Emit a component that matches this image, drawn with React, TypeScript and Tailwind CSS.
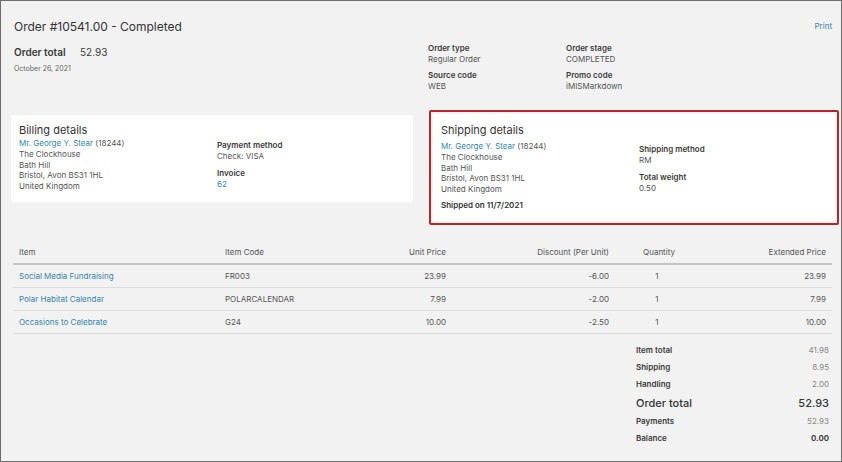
import React from "react";

const link = "text-[#3585ad]";

function Field({ label, value, valueClass = "" }: { label: string; value: string; valueClass?: string }) {
  return (
    <div>
      <div className="text-[8px] leading-[11px] font-semibold text-[#3a3a3a]">{label}</div>
      <div className={`text-[8px] leading-[11px] text-[#555] ${valueClass}`}>{value}</div>
    </div>
  );
}

const rows = [
  { item: "Social Media Fundraising", code: "FR003", unit: "23.99", disc: "-6.00", qty: "1", ext: "23.99" },
  { item: "Polar Habitat Calendar", code: "POLARCALENDAR", unit: "7.99", disc: "-2.00", qty: "1", ext: "7.99" },
  { item: "Occasions to Celebrate", code: "G24", unit: "10.00", disc: "-2.50", qty: "1", ext: "10.00" },
];

const gridCols = "grid grid-cols-[206px_131px_102px_163px_88px_129px]";

export default function App() {
  return (
    <div className="w-[842px] h-[462px] border border-[#6e6e6e] bg-[#f2f2f2] overflow-hidden font-['Inter',sans-serif] text-[#555]">
      {/* Top section */}
      <div className="h-[109px] flex items-start pl-[13px] pr-[9px] pt-[18px]">
        <div className="w-[414px] flex flex-col">
          <div className="text-[12px] leading-[16px] text-[#333]">Order #10541.00 - Completed</div>
          <div className="mt-[11px] flex items-center text-[10px] leading-[12px] text-[#3a3a3a]">
            <span className="font-semibold w-[66px]">Order total</span>
            <span>52.93</span>
          </div>
          <div className="mt-[6px] text-[7px] leading-[10px] text-[#666]">October 26, 2021</div>
        </div>
        <div className="mt-[24px] grid grid-cols-[138px_140px] gap-y-[5px]">
          <Field label="Order type" value="Regular Order" />
          <Field label="Order stage" value="COMPLETED" />
          <Field label="Source code" value="WEB" />
          <Field label="Promo code" value="iMISMarkdown" />
        </div>
        <div className={`ml-auto mt-[2px] text-[8px] leading-[10px] ${link}`}>Print</div>
      </div>

      {/* Cards */}
      <div className="flex items-start pl-[10px]">
        <div className="mt-[5px] w-[402px] bg-white rounded-[3px] pl-[8px] pt-[8px] pb-[10px]">
          <div className="text-[11px] leading-[14px] text-[#333]">Billing details</div>
          <div className="mt-[1px] flex items-start">
            <div className="w-[198px] text-[8px] leading-[10.75px] text-[#555]">
              <div>
                <span className={link}>Mr. George Y. Stear</span> (18244)
              </div>
              <div>The Clockhouse</div>
              <div>Bath Hill</div>
              <div>Bristol, Avon BS31 1HL</div>
              <div>United Kingdom</div>
            </div>
            <div className="flex flex-col gap-y-[5.5px] translate-y-[2px]">
              <Field label="Payment method" value="Check: VISA" />
              <Field label="Invoice" value="62" valueClass={link} />
            </div>
          </div>
        </div>

        <div className="ml-[16px] border-2 border-[#b3262e] rounded-[2px] p-[2px]">
          <div className="w-[402px] bg-white rounded-[3px] pl-[8px] pt-[9px] pb-[10px]">
            <div className="text-[11px] leading-[14px] text-[#333]">Shipping details</div>
            <div className="mt-[4px] flex items-start">
              <div className="w-[198px] text-[8px] leading-[10.75px] text-[#555]">
                <div>
                  <span className={link}>Mr. George Y. Stear</span> (18244)
                </div>
                <div>The Clockhouse</div>
                <div>Bath Hill</div>
                <div>Bristol, Avon BS31 1HL</div>
                <div>United Kingdom</div>
                <div className="mt-[5px] font-semibold text-[#333]">Shipped on 11/7/2021</div>
              </div>
              <div className="flex flex-col gap-y-[5.5px] translate-y-[3px]">
                <Field label="Shipping method" value="RM" />
                <Field label="Total weight" value="0.50" />
              </div>
            </div>
          </div>
        </div>
      </div>

      {/* Table */}
      <div className="mt-[17px] ml-[12px] w-[819px] text-[8px] text-[#555]">
        <div className={`${gridCols} h-[23px] items-center border-b-2 border-[#c4c4c4]`}>
          <div className="px-[6px]">Item</div>
          <div className="px-[6px]">Item Code</div>
          <div className="px-[6px] text-right">Unit Price</div>
          <div className="px-[6px] text-right">Discount (Per Unit)</div>
          <div className="px-[6px] text-center">Quantity</div>
          <div className="px-[6px] text-right">Extended Price</div>
        </div>
        {rows.map((r) => (
          <div key={r.code} className={`${gridCols} h-[23px] items-center border-b border-[#dcdcdc]`}>
            <div className={`px-[6px] ${link}`}>{r.item}</div>
            <div className="px-[6px]">{r.code}</div>
            <div className="px-[6px] text-right">{r.unit}</div>
            <div className="px-[6px] text-right">{r.disc}</div>
            <div className="px-[6px] text-center pr-[10px]">{r.qty}</div>
            <div className="px-[6px] text-right">{r.ext}</div>
          </div>
        ))}
      </div>

      {/* Summary */}
      <div className="mt-[8px] ml-[635px] w-[193px] text-[8px]">
        <div className="flex justify-between leading-[17px]">
          <span className="font-semibold text-[#3a3a3a]">Item total</span>
          <span className="text-[#888]">41.98</span>
        </div>
        <div className="flex justify-between leading-[17px]">
          <span className="font-semibold text-[#3a3a3a]">Shipping</span>
          <span className="text-[#888]">8.95</span>
        </div>
        <div className="flex justify-between leading-[17px]">
          <span className="font-semibold text-[#3a3a3a]">Handling</span>
          <span className="text-[#888]">2.00</span>
        </div>
        <div className="flex justify-between items-center leading-[20px] text-[11px] text-[#333]">
          <span className="font-medium">Order total</span>
          <span className="font-medium">52.93</span>
        </div>
        <div className="flex justify-between leading-[17px]">
          <span className="font-semibold text-[#3a3a3a]">Payments</span>
          <span className="text-[#888]">52.93</span>
        </div>
        <div className="flex justify-between leading-[17px]">
          <span className="font-semibold text-[#3a3a3a]">Balance</span>
          <span className="font-semibold text-[#333]">0.00</span>
        </div>
      </div>
    </div>
  );
}
